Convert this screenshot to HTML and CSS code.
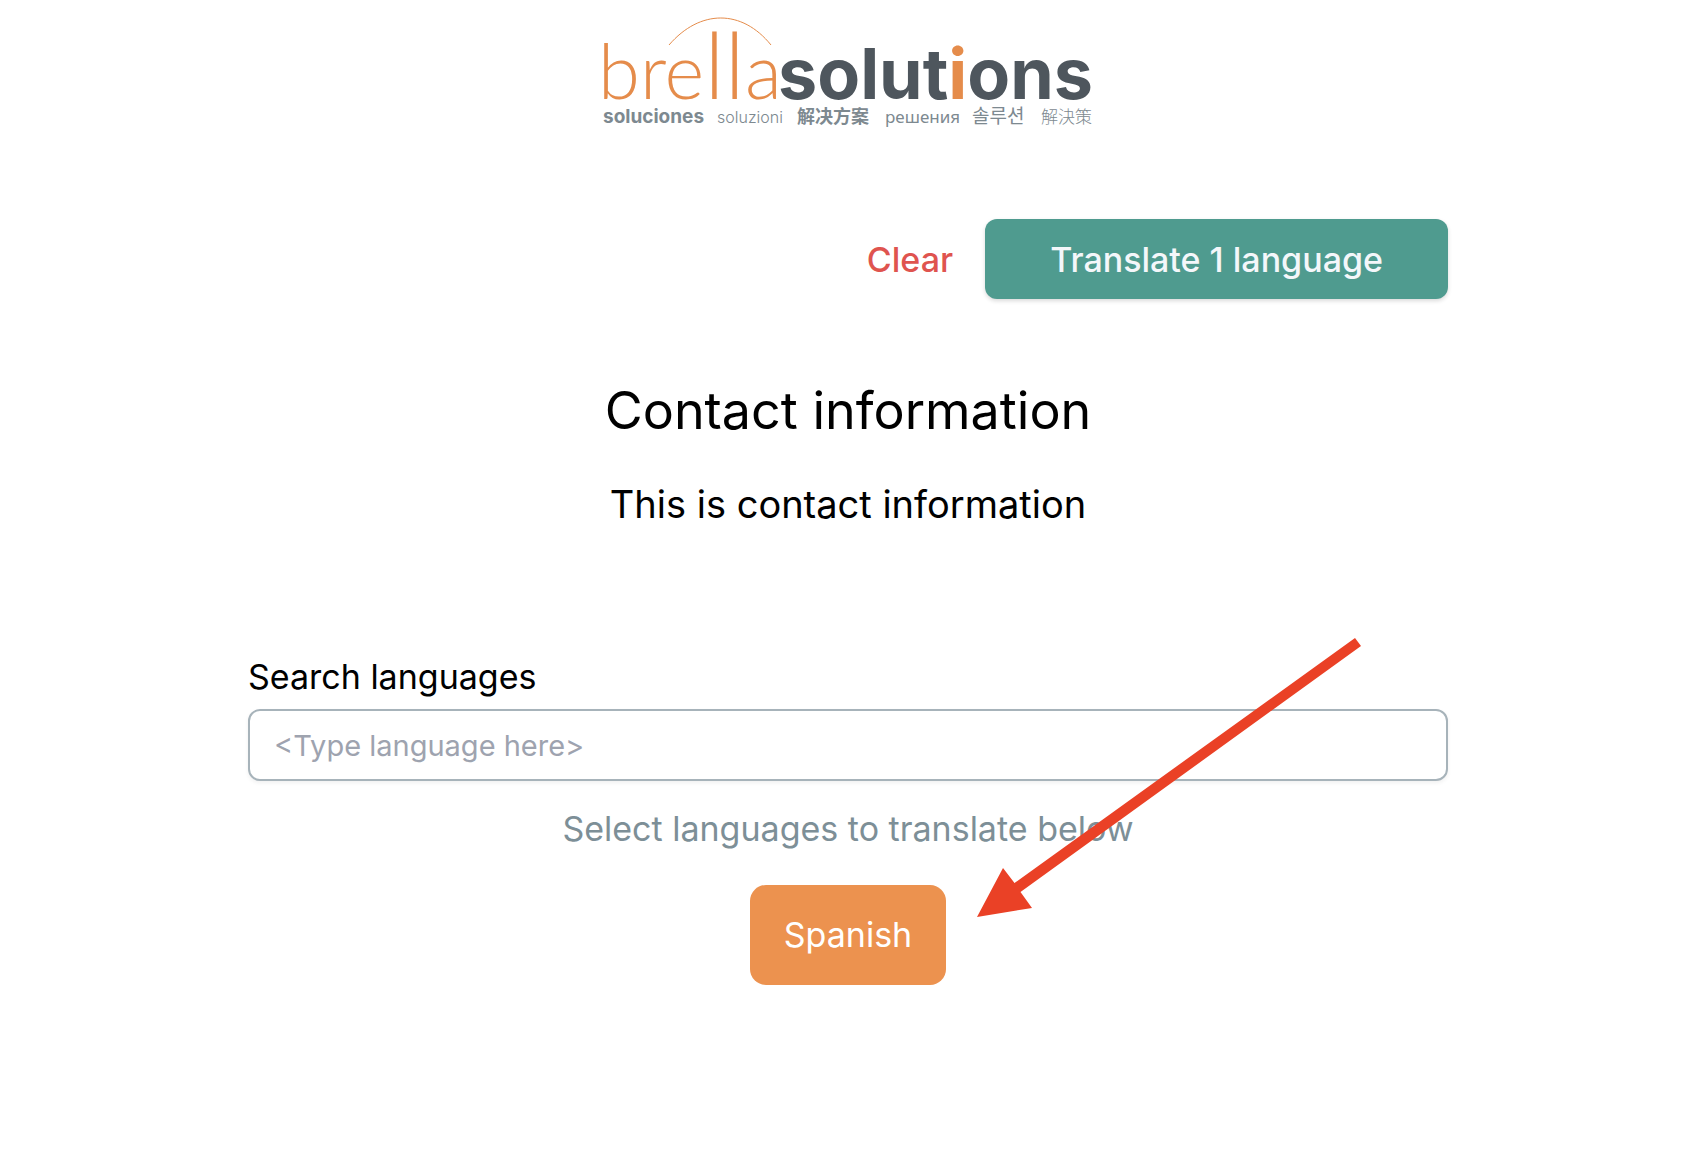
FILE: index.html
```html
<!DOCTYPE html>
<html lang="en">
<head>
<meta charset="utf-8">
<meta name="viewport" content="width=device-width, initial-scale=1">
<title>Brella Solutions</title>
<link rel="stylesheet" href="styles.css">
</head>
<body>
<header class="site-header">
  <svg class="logo" viewBox="0 0 488 116" role="img" aria-label="brella solutions">
    <path class="logo-arc" d="M65 29C96 -7 138 -7 167 29"/>
    <text class="logo-brella" x="-6" y="83">bre<tspan class="logo-tall">ll</tspan>a</text>
    <text class="logo-solutions" x="174" y="83">solut<tspan class="logo-accent">i</tspan>ons</text>
    <g class="logo-tags">
      <text class="tag-bold" x="-1" y="107">soluciones</text>
      <text class="tag-light" x="113" y="107">soluzioni</text>
      <text class="tag-sc" x="193" y="107">解决方案</text>
      <text class="tag-ru" x="281" y="107">решения</text>
      <text class="tag-kr" x="368" y="107">솔루션</text>
      <text class="tag-jp" x="437" y="107">解決策</text>
    </g>
  </svg>
</header>
<main class="page">
  <div class="actions">
    <button type="button" class="clear">Clear</button>
    <button type="button" class="translate">Translate 1 language</button>
  </div>
  <section class="intro">
    <h1>Contact information</h1>
    <p>This is contact information</p>
  </section>
  <section class="picker">
    <label for="search">Search languages</label>
    <input id="search" type="text" placeholder="&lt;Type language here&gt;">
    <p class="hint">Select languages to translate below</p>
    <button type="button" class="language">Spanish</button>
    <svg class="arrow" viewBox="0 0 384 279" aria-hidden="true">
      <path d="M0 279L26 230L37.500 245L378 0L384 8L43.500 254L55 270Z"/>
    </svg>
  </section>
</main>
</body>
</html>
```
FILE: styles.css
```css
* {
  box-sizing: border-box;
}

body {
  margin: 0;
  padding: 16px 20px 40px 16px;
  background: #fff;
  color: #000;
  font-family: Inter, "Liberation Sans", sans-serif;
}

h1,
p {
  margin: 0;
  font-weight: 400;
}

button,
input {
  font: inherit;
}

button {
  border: 0;
  cursor: pointer;
}

.site-header {
  display: flex;
  justify-content: center;
}

.logo {
  width: 488px;
  height: 116px;
  max-width: 100%;
  overflow: visible;
}

.logo-arc {
  fill: none;
  stroke: #e58c4b;
  stroke-width: 1;
}

.logo-brella {
  font-family: Lato, sans-serif;
  font-size: 76px;
  font-weight: 300;
  fill: #e58c4b;
}

.logo-tall {
  font-size: 92px;
}

.logo-solutions {
  font-size: 70px;
  font-weight: 700;
  fill: #4e565d;
}

.logo-accent {
  fill: #e58c4b;
}

.logo-tags {
  font-size: 19px;
  fill: #7d8990;
}

.tag-bold {
  font-weight: 700;
}

.tag-light {
  font-size: 16px;
  font-weight: 300;
}

.tag-sc {
  font-family: "Noto Sans CJK SC", sans-serif;
  font-size: 18px;
  font-weight: 700;
}

.tag-ru {
  font-family: "Noto Sans", sans-serif;
  font-size: 17px;
}

.tag-kr {
  font-family: "Noto Sans CJK KR", sans-serif;
}

.tag-jp {
  font-family: "Noto Sans CJK JP", sans-serif;
  font-size: 17px;
  font-weight: 300;
}

.page {
  max-width: 1200px;
  margin: 87px auto 0;
}

.actions {
  display: flex;
  justify-content: flex-end;
  align-items: center;
  gap: 32px;
  font-size: 34px;
  font-weight: 500;
}

.clear {
  padding: 0;
  background: none;
  color: #df544f;
}

.translate {
  min-height: 80px;
  padding: 0 65px;
  border-radius: 12px;
  background: #4f9b8f;
  box-shadow: 0 2px 4px rgba(0, 0, 0, 0.15);
  color: #f4f7fa;
}

.intro {
  margin-top: 76px;
  text-align: center;
}

.intro h1 {
  font-size: 52px;
  line-height: 72px;
}

.intro p {
  margin-top: 29px;
  font-size: 38px;
  line-height: 56px;
}

.picker {
  position: relative;
  display: flex;
  flex-direction: column;
  align-items: center;
  margin-top: 121px;
  font-size: 34px;
  line-height: 48px;
}

.picker label {
  align-self: flex-start;
}

.picker input {
  width: 100%;
  height: 72px;
  margin-top: 8px;
  padding: 0 24px;
  border: 2px solid #a7b3ba;
  border-radius: 12px;
  background: #fff;
  box-shadow: 0 2px 4px rgba(0, 0, 0, 0.06);
  font-size: 29px;
}

.picker input::placeholder {
  color: #9ea3af;
  opacity: 1;
}

.hint {
  margin-top: 24px;
  color: #7d8f97;
}

.language {
  margin-top: 32px;
  padding: 26px 34px;
  border-radius: 16px;
  background: #ec924f;
  color: #fff;
}

.arrow {
  position: absolute;
  top: -15px;
  left: 729px;
  width: 384px;
  fill: #ea4126;
  pointer-events: none;
}
```
